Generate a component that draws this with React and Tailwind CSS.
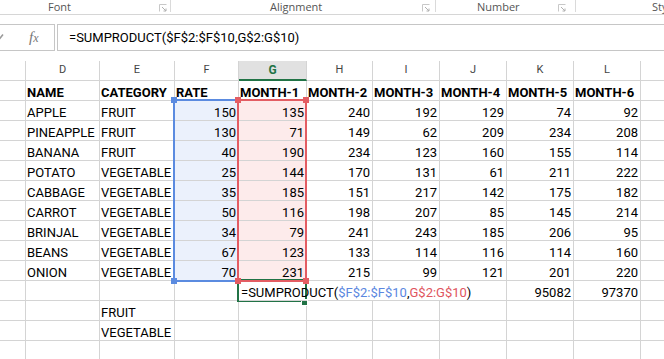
import React from "react";

const rows = [
  ["NAME", "CATEGORY", "RATE", "MONTH-1", "MONTH-2", "MONTH-3", "MONTH-4", "MONTH-5", "MONTH-6"],
  ["APPLE", "FRUIT", 150, 135, 240, 192, 129, 74, 92],
  ["PINEAPPLE", "FRUIT", 130, 71, 149, 62, 209, 234, 208],
  ["BANANA", "FRUIT", 40, 190, 234, 123, 160, 155, 114],
  ["POTATO", "VEGETABLE", 25, 144, 170, 131, 61, 211, 222],
  ["CABBAGE", "VEGETABLE", 35, 185, 151, 217, 142, 175, 182],
  ["CARROT", "VEGETABLE", 50, 116, 198, 207, 85, 145, 214],
  ["BRINJAL", "VEGETABLE", 34, 79, 241, 243, 185, 206, 95],
  ["BEANS", "VEGETABLE", 67, 123, 133, 114, 116, 114, 160],
  ["ONION", "VEGETABLE", 70, 231, 215, 99, 121, 201, 220],
  ["", "", "", "__F__", "", "", "", 95082, 97370],
  ["", "FRUIT", "", "", "", "", "", "", ""],
  ["", "VEGETABLE", "", "", "", "", "", "", ""],
  ["", "", "", "", "", "", "", "", ""],
];

const letters = ["D", "E", "F", "G", "H", "I", "J", "K", "L"];

function Launcher() {
  return (
    <svg width="8" height="8" viewBox="0 0 8 8" className="shrink-0">
      <path d="M0.5 7.5V0.5H7.5" fill="none" stroke="#c8c8c8" strokeWidth="1" />
      <path d="M3 3L7 7M7 4.5V7H4.5" fill="none" stroke="#b0b0b0" strokeWidth="1" />
    </svg>
  );
}

function Formula() {
  return (
    <span>
      =SUMPRODUCT(
      <span className="text-[#5b87e0]">$F$2:$F$10</span>,
      <span className="text-[#e0555e]">G$2:G$10</span>)
    </span>
  );
}

export default function App() {
  return (
    <div className="w-[664px] h-[359px] overflow-hidden bg-white relative font-['Roboto',sans-serif] text-black">
      {/* ribbon group labels */}
      <div className="h-[15px] border-b border-[#d6d6d6] flex font-['Open_Sans',sans-serif] text-[11px] leading-[13px] text-[#555]">
        <div className="w-[171px] flex items-start">
          <span className="ml-[48px]">Font</span>
          <div className="ml-auto mr-[3px] mt-[4px]"><Launcher /></div>
          <div className="w-px h-[12px] bg-[#dadada]" />
        </div>
        <div className="w-[265px] flex items-start">
          <span className="ml-[99px]">Alignment</span>
          <div className="ml-auto mr-[5px] mt-[4px]"><Launcher /></div>
          <div className="w-px h-[12px] bg-[#dadada]" />
        </div>
        <div className="w-[140px] flex items-start">
          <span className="ml-[41px]">Number</span>
          <div className="ml-auto mr-[9px] mt-[4px]"><Launcher /></div>
          <div className="w-px h-[12px] bg-[#dadada]" />
        </div>
        <div className="flex-1 flex items-start overflow-hidden">
          <span className="ml-[76px] whitespace-nowrap">Styles</span>
        </div>
      </div>

      {/* formula bar */}
      <div className="mt-[9px] h-[27px] flex">
        <div className="w-[55px] border-t border-b border-r border-[#c6c6c6] relative">
          <svg width="8" height="8" viewBox="0 0 8 8" className="absolute left-[-4px] top-[8px]">
            <path d="M1 4.5L3 6.5L7 1.5" fill="none" stroke="#9a9a9a" strokeWidth="1.6" />
          </svg>
          <span className="absolute left-[29px] top-[4px] font-['Liberation_Serif',serif] italic text-[15px] leading-[16px] text-[#777]">
            f<span className="text-[12px]">x</span>
          </span>
        </div>
        <div className="w-[2px]" />
        <div className="flex-1 border-t border-b border-l border-[#c6c6c6] flex items-center pl-[11px] text-[13px]">
          =SUMPRODUCT($F$2:$F$10,G$2:G$10)
        </div>
      </div>

      {/* grid */}
      <div className="mt-[10px] relative">
        <div className="grid grid-cols-[26px_74px_75px_64px_68px_66px_67px_67px_67px_67px_1fr] text-[13px]">
          {/* column header row */}
          <div className="h-[20px] border-b border-r border-[#d4d4d4]" />
          {letters.map((l) =>
            l === "G" ? (
              <div key={l} className="h-[20px] border-b-2 border-r border-b-[#217346] border-r-[#d4d4d4] bg-[#e1e1e1] flex items-center justify-center text-[12px] font-bold text-[#217346]">
                {l}
              </div>
            ) : (
              <div key={l} className="h-[20px] border-b border-r border-[#d4d4d4] flex items-center justify-center text-[11px] text-[#444]">
                {l}
              </div>
            )
          )}
          <div className="h-[20px] border-b border-[#d4d4d4]" />

          {rows.map((r, ri) => (
            <React.Fragment key={ri}>
              <div className="h-[20px] border-b border-r border-[#d4d4d4]" />
              {r.map((v, ci) => {
                const isNum = typeof v === "number";
                const rowNum = ri + 1;
                const inSel = rowNum >= 2 && rowNum <= 10;
                let bg = "";
                if (inSel && ci === 2) bg = "bg-[#ebf1fc]";
                if (inSel && ci === 3) bg = "bg-[#fdebeb]";
                const noRight = rowNum === 11 && (ci === 3 || ci === 4 || ci === 5);
                const cls = [
                  "h-[20px] border-b border-[#d4d4d4] pt-[5px] leading-[14px] whitespace-nowrap",
                  noRight ? "" : "border-r",
                  bg,
                  isNum ? "text-right pr-[2px]" : "pl-[1px]",
                  rowNum === 1 ? "font-bold" : "",
                  v === "__F__" ? "relative z-10 pl-[2px]" : "",
                ].join(" ");
                return (
                  <div key={ci} className={cls}>
                    {v === "__F__" ? <Formula /> : v}
                  </div>
                );
              })}
              <div className="h-[20px] border-b border-[#d4d4d4]" />
            </React.Fragment>
          ))}
        </div>

        {/* active cell G11 */}
        <div className="absolute left-[237px] top-[218px] w-[70px] h-[23px] border-2 border-[#217346] pointer-events-none" />
        <div className="absolute left-[301px] top-[238px] w-[7px] h-[7px] bg-[#217346] border border-white" />

        {/* range F2:F10 */}
        <div className="absolute left-[173px] top-[38px] w-[66px] h-[183px] border-2 border-[#5b8be0] pointer-events-none" />
        {/* range G2:G10 */}
        <div className="absolute left-[237px] top-[38px] w-[70px] h-[183px] border-2 border-[#e35d63] pointer-events-none" />

        {/* handles */}
        <div className="absolute left-[171px] top-[36px] w-[6px] h-[6px] bg-[#5b8be0]" />
        <div className="absolute left-[171px] top-[217px] w-[6px] h-[6px] bg-[#5b8be0]" />
        <div className="absolute left-[235px] top-[36px] w-[6px] h-[6px] bg-[#e35d63]" />
        <div className="absolute left-[303px] top-[36px] w-[6px] h-[6px] bg-[#e35d63]" />
        <div className="absolute left-[235px] top-[217px] w-[6px] h-[6px] bg-[#e35d63]" />
        <div className="absolute left-[303px] top-[217px] w-[6px] h-[6px] bg-[#e35d63]" />
      </div>
    </div>
  );
}
